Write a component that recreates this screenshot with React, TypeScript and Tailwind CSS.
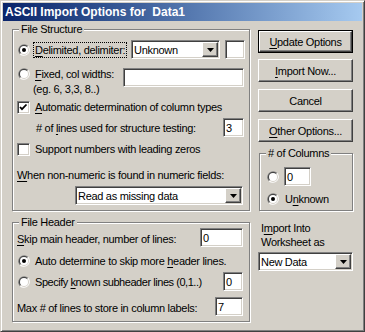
import React from 'react';

// classic win9x dialog look
const sunken =
  'border border-t-[#808080] border-l-[#808080] border-b-white border-r-white shadow-[inset_1px_1px_0_#404040,inset_-1px_-1px_0_#d4d0c8]';
const raised =
  'border border-t-white border-l-white border-b-[#404040] border-r-[#404040] shadow-[inset_-1px_-1px_0_#808080,inset_1px_1px_0_#d4d0c8]';

const U = ({ children }: { children: React.ReactNode }) => (
  <span className="underline underline-offset-[2px]">{children}</span>
);

const Radio = ({ on }: { on?: boolean }) => (
  <svg width="12" height="12" viewBox="0 0 12 12" className="shrink-0">
    <path d="M10.24 1.76A6 6 0 0 0 1.76 10.24Z" fill="#808080" />
    <path d="M10.24 1.76A6 6 0 0 1 1.76 10.24Z" fill="#ffffff" />
    <path d="M9.54 2.46A5 5 0 0 0 2.46 9.54Z" fill="#404040" />
    <path d="M9.54 2.46A5 5 0 0 1 2.46 9.54Z" fill="#d4d0c8" />
    <circle cx="6" cy="6" r="4" fill="#ffffff" />
    {on && <circle cx="6" cy="6" r="2" fill="#000000" />}
  </svg>
);

const Check = ({ on }: { on?: boolean }) => (
  <div className={`w-[13px] h-[13px] shrink-0 bg-white ${sunken}`}>
    {on && (
      <svg width="11" height="11" viewBox="0 0 11 11">
        <path d="M2 5l2 2.2L8.5 2.5" stroke="#000" strokeWidth="1.8" fill="none" />
      </svg>
    )}
  </div>
);

const Field = ({ value, className }: { value: string; className: string }) => (
  <div className={`h-[19px] bg-white flex items-center pl-[2px] shrink-0 ${sunken} ${className}`}>{value}</div>
);

const Combo = ({ text, className }: { text: string; className: string }) => (
  <div className={`h-[19px] bg-white flex shrink-0 ${sunken} ${className}`}>
    <span className="flex-1 pl-[2px] flex items-center">{text}</span>
    <div className={`w-[16px] bg-[#d4d0c8] flex items-center justify-center mt-[1px] mr-[1px] h-[15px] ${raised}`}>
      <svg width="7" height="4" viewBox="0 0 7 4">
        <path d="M0 0h7L3.5 4z" fill="#000" />
      </svg>
    </div>
  </div>
);

const Button = ({ children, main }: { children: React.ReactNode; main?: boolean }) =>
  main ? (
    <div className="h-[23px] w-[95px] border border-black">
      <div className={`h-full w-full flex items-center justify-center ${raised}`}>{children}</div>
    </div>
  ) : (
    <div className={`h-[23px] w-[95px] flex items-center justify-center ${raised}`}>{children}</div>
  );

const Group = ({ label, className, children }: { label: string; className: string; children: React.ReactNode }) => (
  <div className={`relative border border-[#808080] shadow-[inset_1px_1px_0_#fff,1px_1px_0_#fff] ${className}`}>
    <span className="absolute -top-[8px] left-[6px] px-[2px] bg-[#d4d0c8] leading-[14px]">{label}</span>
    {children}
  </div>
);

export default function App() {
  return (
    <div className="w-[365px] h-[332px] bg-[#d4d0c8] border border-t-[#d4d0c8] border-l-[#d4d0c8] border-b-[#404040] border-r-[#404040] p-[2px] shadow-[inset_1px_1px_0_#fff,inset_-1px_-1px_0_#808080] text-[11px] leading-[14px] tracking-[-0.3px] whitespace-nowrap text-black font-['Liberation_Sans',Arial,sans-serif]">
      <div className="h-[18px] bg-gradient-to-r from-[#0a246a] to-[#a6caf0] flex items-center pl-[2px] text-white font-bold text-[12px] tracking-normal whitespace-pre">
        ASCII Import Options for  Data1
      </div>

      <div className="flex pt-[8px] pl-[9px]">
        {/* left column */}
        <div className="w-[238px] flex flex-col">
          <Group label="File Structure" className="h-[182px] flex flex-col pt-[10px] pl-[5px]">
            <div className="flex items-center h-[19px]">
              <Radio on />
              <div className="ml-[3px] w-[94px] h-[16px] border border-dotted border-black px-[1px] flex items-center">
                <span><U>D</U>elimited, delimiter:</span>
              </div>
              <Combo text="Unknown" className="ml-[4px] w-[89px]" />
              <Field value="" className="ml-[5px] w-[20px]" />
            </div>

            <div className="flex items-start mt-[8px]">
              <div className="w-[105px] flex flex-col">
                <div className="flex items-center h-[14px]">
                  <Radio />
                  <span className="ml-[5px]"><U>F</U>ixed, col widths:</span>
                </div>
                <div className="h-[15px] pl-[15px] flex items-center">(eg. 6, 3,3, 8..)</div>
              </div>
              <Field value="" className="mt-[1px] w-[121px]" />
            </div>

            <div className="flex items-center h-[14px] mt-[4px] -ml-[1px]">
              <Check on />
              <span className="ml-[5px]"><U>A</U>utomatic determination of column types</span>
            </div>

            <div className="flex items-center h-[19px] mt-[4px] pl-[18px]">
              <span className="w-[187px]"># of <U>l</U>ines used for structure testing:</span>
              <Field value="3" className="w-[21px]" />
            </div>

            <div className="flex items-center h-[14px] mt-[5px] -ml-[1px]">
              <Check />
              <span className="ml-[5px]">Support numbers with leading zeros</span>
            </div>

            <div className="flex items-center h-[14px] mt-[12px] -ml-[1px]">
              <span><U>W</U>hen non-numeric is found in numeric fields:</span>
            </div>

            <div className="flex h-[19px] mt-[4px] pl-[57px]">
              <Combo text="Read as missing data" className="w-[168px]" />
            </div>
          </Group>

          <Group label="File Header" className="h-[100px] mt-[11px] flex flex-col pt-[5px] pl-[5px]">
            <div className="flex items-center h-[19px] -ml-[1px]">
              <span className="w-[183px] pt-[3px]"><U>S</U>kip main header, number of lines:</span>
              <Field value="0" className="w-[43px]" />
            </div>

            <div className="flex items-center h-[14px] mt-[7px]">
              <Radio on />
              <span className="ml-[5px]">Auto determine to skip more <U>h</U>eader lines.</span>
            </div>

            <div className="flex items-center h-[19px] mt-[4px]">
              <Radio />
              <span className="ml-[5px] w-[188px] tracking-[-0.45px]">Specify <U>k</U>nown subheader lines (0,1..)</span>
              <Field value="0" className="w-[20px]" />
            </div>

            <div className="flex items-center h-[19px] mt-[6px] -ml-[1px]">
              <span className="w-[198px] pt-[2px]">Max # of lines to store in column labels:</span>
              <Field value="7" className="w-[28px]" />
            </div>
          </Group>
        </div>

        {/* right column */}
        <div className="ml-[8px] w-[95px] flex flex-col">
          <div className="mt-[1px]">
            <Button main><span><U>U</U>pdate Options</span></Button>
          </div>
          <div className="mt-[6px]">
            <Button><span><U>I</U>mport Now...</span></Button>
          </div>
          <div className="mt-[7px]">
            <Button>Cancel</Button>
          </div>
          <div className="mt-[7px]">
            <Button><span><U>O</U>ther Options...</span></Button>
          </div>

          <Group label="# of Columns" className="ml-[1px] w-[94px] h-[58px] mt-[11px] flex flex-col pt-[13px] pl-[7px]">
            <div className="flex items-center h-[19px]">
              <Radio />
              <Field value="0" className="ml-[5px] w-[27px]" />
            </div>
            <div className="flex items-center h-[14px] mt-[6px]">
              <Radio on />
              <span className="ml-[6px]">U<U>n</U>known</span>
            </div>
          </Group>

          <div className="mt-[10px] pl-[3px] flex flex-col">
            <span className="h-[14px]">I<U>m</U>port Into</span>
            <span className="h-[14px]">Worksheet as</span>
          </div>
          <Combo text="New Data" className="mt-[3px] w-[95px]" />
        </div>
      </div>
    </div>
  );
}
